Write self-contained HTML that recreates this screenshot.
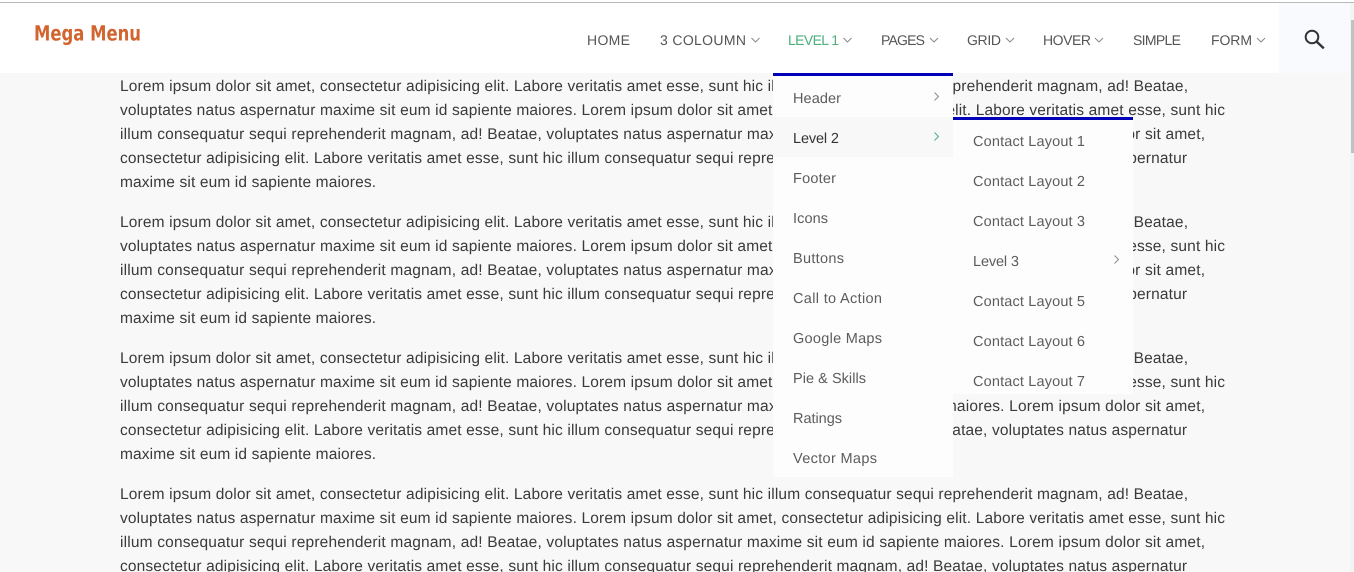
<!DOCTYPE html>
<html lang="en">
<head>
<meta charset="utf-8">
<title>Mega Menu</title>
<style>
html,body{margin:0;padding:0;width:1354px;height:572px;overflow:hidden;background:#f8f8f9}
svg{display:block;position:absolute;left:0;top:0}
text{font-family:"Liberation Sans",sans-serif;text-rendering:geometricPrecision}
.b{font-size:15.5px;fill:#3a3a3a}
.n{font-size:14px;fill:#555}
.m{font-size:14.5px;fill:#5c5c5c}
.c{fill:none;stroke:#8a8a8a;stroke-width:1}
</style>
</head>
<body>
<svg width="1354" height="572" viewBox="0 0 1354 572" xmlns="http://www.w3.org/2000/svg">
<rect width="1354" height="572" fill="#f8f8f9"/>

<!-- paragraph 1 -->
<text class="b" x="120" y="91" textLength="1068">Lorem ipsum dolor sit amet, consectetur adipisicing elit. Labore veritatis amet esse, sunt hic illum consequatur sequi reprehenderit magnam, ad! Beatae,</text>
<text class="b" x="120" y="115" textLength="1105">voluptates natus aspernatur maxime sit eum id sapiente maiores. Lorem ipsum dolor sit amet, consectetur adipisicing elit. Labore veritatis amet esse, sunt hic</text>
<text class="b" x="120" y="139" textLength="1085">illum consequatur sequi reprehenderit magnam, ad! Beatae, voluptates natus aspernatur maxime sit eum id sapiente maiores. Lorem ipsum dolor sit amet,</text>
<text class="b" x="120" y="163" textLength="1067">consectetur adipisicing elit. Labore veritatis amet esse, sunt hic illum consequatur sequi reprehenderit magnam, ad! Beatae, voluptates natus aspernatur</text>
<text class="b" x="120" y="187" textLength="256">maxime sit eum id sapiente maiores.</text>
<!-- paragraph 2 -->
<text class="b" x="120" y="227" textLength="1068">Lorem ipsum dolor sit amet, consectetur adipisicing elit. Labore veritatis amet esse, sunt hic illum consequatur sequi reprehenderit magnam, ad! Beatae,</text>
<text class="b" x="120" y="251" textLength="1105">voluptates natus aspernatur maxime sit eum id sapiente maiores. Lorem ipsum dolor sit amet, consectetur adipisicing elit. Labore veritatis amet esse, sunt hic</text>
<text class="b" x="120" y="275" textLength="1085">illum consequatur sequi reprehenderit magnam, ad! Beatae, voluptates natus aspernatur maxime sit eum id sapiente maiores. Lorem ipsum dolor sit amet,</text>
<text class="b" x="120" y="299" textLength="1067">consectetur adipisicing elit. Labore veritatis amet esse, sunt hic illum consequatur sequi reprehenderit magnam, ad! Beatae, voluptates natus aspernatur</text>
<text class="b" x="120" y="323" textLength="256">maxime sit eum id sapiente maiores.</text>
<!-- paragraph 3 -->
<text class="b" x="120" y="363" textLength="1068">Lorem ipsum dolor sit amet, consectetur adipisicing elit. Labore veritatis amet esse, sunt hic illum consequatur sequi reprehenderit magnam, ad! Beatae,</text>
<text class="b" x="120" y="387" textLength="1105">voluptates natus aspernatur maxime sit eum id sapiente maiores. Lorem ipsum dolor sit amet, consectetur adipisicing elit. Labore veritatis amet esse, sunt hic</text>
<text class="b" x="120" y="411" textLength="1085">illum consequatur sequi reprehenderit magnam, ad! Beatae, voluptates natus aspernatur maxime sit eum id sapiente maiores. Lorem ipsum dolor sit amet,</text>
<text class="b" x="120" y="435" textLength="1067">consectetur adipisicing elit. Labore veritatis amet esse, sunt hic illum consequatur sequi reprehenderit magnam, ad! Beatae, voluptates natus aspernatur</text>
<text class="b" x="120" y="459" textLength="256">maxime sit eum id sapiente maiores.</text>
<!-- paragraph 4 -->
<text class="b" x="120" y="499" textLength="1068">Lorem ipsum dolor sit amet, consectetur adipisicing elit. Labore veritatis amet esse, sunt hic illum consequatur sequi reprehenderit magnam, ad! Beatae,</text>
<text class="b" x="120" y="523" textLength="1105">voluptates natus aspernatur maxime sit eum id sapiente maiores. Lorem ipsum dolor sit amet, consectetur adipisicing elit. Labore veritatis amet esse, sunt hic</text>
<text class="b" x="120" y="547" textLength="1085">illum consequatur sequi reprehenderit magnam, ad! Beatae, voluptates natus aspernatur maxime sit eum id sapiente maiores. Lorem ipsum dolor sit amet,</text>
<text class="b" x="120" y="571" textLength="1067">consectetur adipisicing elit. Labore veritatis amet esse, sunt hic illum consequatur sequi reprehenderit magnam, ad! Beatae, voluptates natus aspernatur</text>

<!-- header -->
<rect x="0" y="0" width="1354" height="73" fill="#ffffff"/>
<rect x="1279" y="3" width="71" height="70" fill="#f9fafd"/>
<rect x="0" y="2" width="1354" height="1" fill="#b9b9b9"/>
<text x="34" y="40.5" font-size="21" font-weight="700" fill="#d2652f" textLength="107" lengthAdjust="spacingAndGlyphs" style="font-family:'DejaVu Sans',sans-serif">Mega Menu</text>

<text class="n" x="587" y="45" textLength="43">HOME</text>
<text class="n" x="660" y="45" textLength="86">3 COLOUMN</text>
<path class="c" d="M751.5 38l4 4 4-4"/>
<text class="n" x="788" y="45" textLength="51" style="fill:#4caf7d">LEVEL 1</text>
<path class="c" d="M843.5 38l4 4 4-4"/>
<text class="n" x="881" y="45" textLength="44">PAGES</text>
<path class="c" d="M930 38l4 4 4-4"/>
<text class="n" x="967" y="45" textLength="34">GRID</text>
<path class="c" d="M1006 38l4 4 4-4"/>
<text class="n" x="1043" y="45" textLength="48">HOVER</text>
<path class="c" d="M1095 38l4 4 4-4"/>
<text class="n" x="1133" y="45" textLength="48">SIMPLE</text>
<text class="n" x="1211" y="45" textLength="41">FORM</text>
<path class="c" d="M1257 38l4 4 4-4"/>

<!-- search icon -->
<circle cx="1312" cy="37" r="6.3" fill="none" stroke="#333" stroke-width="2"/>
<path d="M1316.8 41.8L1323.8 48.4" fill="none" stroke="#333" stroke-width="2.4"/>

<!-- first dropdown -->
<rect x="773" y="73" width="180" height="404" fill="#fdfdfd"/>
<rect x="773" y="117" width="180" height="40" fill="#f8f8f9"/>
<rect x="773" y="73" width="180" height="3" fill="#0000b8"/>
<text class="m" x="793" y="103" textLength="48">Header</text>
<path class="c" d="M934.5 92.5l4 4-4 4"/>
<text class="m" x="793" y="143" textLength="46" style="fill:#333">Level 2</text>
<path class="c" d="M934.5 132.5l4 4-4 4" style="stroke:#4caf7d"/>
<text class="m" x="793" y="183" textLength="43">Footer</text>
<text class="m" x="793" y="223" textLength="35">Icons</text>
<text class="m" x="793" y="263" textLength="51">Buttons</text>
<text class="m" x="793" y="303" textLength="89">Call to Action</text>
<text class="m" x="793" y="343" textLength="89">Google Maps</text>
<text class="m" x="793" y="383" textLength="73">Pie &amp; Skills</text>
<text class="m" x="793" y="423" textLength="49">Ratings</text>
<text class="m" x="793" y="463" textLength="84">Vector Maps</text>

<!-- second dropdown -->
<rect x="953" y="117" width="180" height="277" fill="#fdfdfd"/>
<rect x="953" y="117" width="180" height="3" fill="#0000b8"/>
<text class="m" x="973" y="146" textLength="112">Contact Layout 1</text>
<text class="m" x="973" y="186" textLength="112">Contact Layout 2</text>
<text class="m" x="973" y="226" textLength="112">Contact Layout 3</text>
<text class="m" x="973" y="266" textLength="46">Level 3</text>
<path class="c" d="M1114.5 255.5l4 4-4 4"/>
<text class="m" x="973" y="306" textLength="112">Contact Layout 5</text>
<text class="m" x="973" y="346" textLength="112">Contact Layout 6</text>
<text class="m" x="973" y="386" textLength="112">Contact Layout 7</text>

<!-- scrollbar -->
<rect x="1350" y="3" width="4" height="569" fill="#f4f4f4"/>
<rect x="1351" y="20" width="3" height="133" fill="#c1c1c1"/>
</svg>
</body>
</html>
